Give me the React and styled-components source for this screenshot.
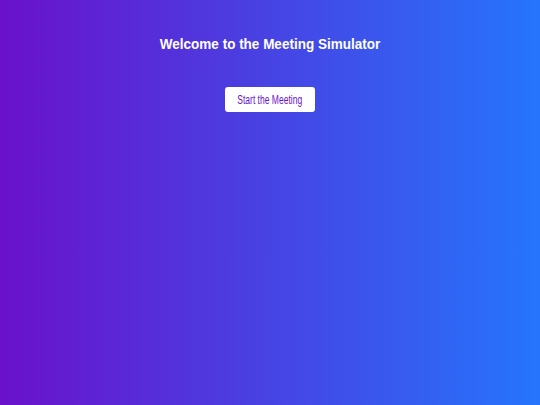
import React from 'react'
import styled, { createGlobalStyle } from 'styled-components'

const GlobalStyle = createGlobalStyle`
  html, body {
    margin: 0;
    padding: 0;
    height: 100%;
  }
  body {
    font-family: "Liberation Sans", Arial, sans-serif;
    background: linear-gradient(to right, #6a11cb, #2575fc);
    min-height: 100vh;
  }
  #root {
    min-height: 100vh;
  }
`

const Page = styled.main`
  min-height: 100vh;
  display: flex;
  flex-direction: column;
  align-items: center;
  padding-top: 36px;
  box-sizing: border-box;
  color: #fff;
`

const Title = styled.h1`
  margin: 0;
  font-size: 13.5px;
  font-weight: bold;
  line-height: 18px;
  color: #fff;
  transform: scaleY(1.08);
`

const StartButton = styled.button`
  margin-top: 33px;
  width: 90px;
  height: 25px;
  padding: 0;
  border: none;
  border-radius: 3px;
  background: #fff;
  color: #6a11cb;
  font-family: "Liberation Sans", Arial, sans-serif;
  font-size: 12px;
  cursor: pointer;
  display: flex;
  align-items: center;
  justify-content: center;
`

const Label = styled.span`
  display: inline-block;
  white-space: nowrap;
  transform: scaleX(0.71);
`

const App = () => {
  return (
    <>
      <GlobalStyle />
      <Page>
        <Title>Welcome to the Meeting Simulator</Title>
        <StartButton>
          <Label>Start the Meeting</Label>
        </StartButton>
      </Page>
    </>
  )
}

export default App
